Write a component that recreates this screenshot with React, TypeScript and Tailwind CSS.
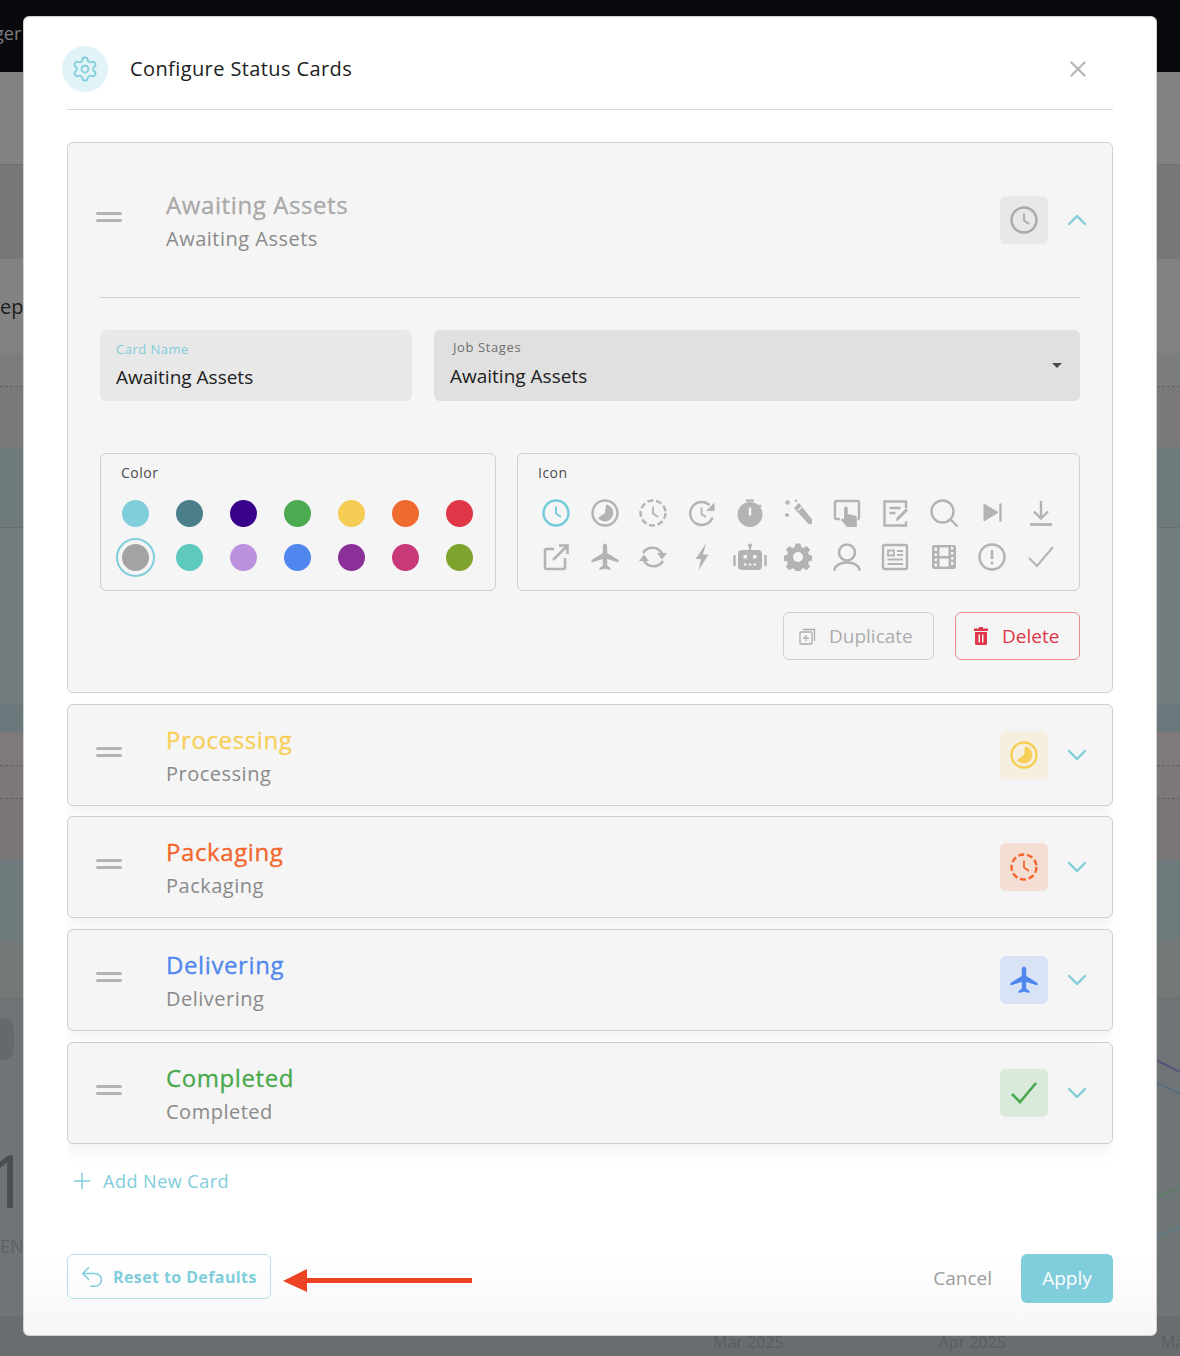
import { ReactNode } from 'react';
import { ChevronDown, ChevronUp, Plus, Settings, Undo2, X } from 'lucide-react';

const font = { fontFamily: '"Open Sans", "Liberation Sans", sans-serif' };

function IconBase({ size = 28, className = '', children }: { size?: number; className?: string; children: ReactNode }) {
  return (
    <svg width={size} height={size} viewBox="0 0 28 28" fill="none" stroke="currentColor" strokeWidth="2.4" className={className}>
      {children}
    </svg>
  );
}

const Clock = () => (
  <IconBase>
    <circle cx="14" cy="14" r="12.5" />
    <path d="M14 7.5v7l5 3.5" strokeWidth="1.8" />
  </IconBase>
);
const Pie = () => (
  <IconBase>
    <circle cx="14" cy="14" r="12.5" />
    <path d="M15 5.500a8.500 8.500 0 1 1-8 13.500l7-5z" fill="currentColor" stroke="none" />
  </IconBase>
);
const DashedClock = () => (
  <IconBase>
    <circle cx="14" cy="14" r="12.5" strokeDasharray="6 2.800" />
    <path d="M14 7.5v7l5 3.5" strokeWidth="1.8" />
  </IconBase>
);
const RotateClock = () => (
  <IconBase>
    <path d="M24.500 18.500A11.500 11.500 0 1 1 21.500 6" />
    <path d="M13.500 8.500v6.500l4.500 3" strokeWidth="1.800" />
    <path d="M26.500 3.500v8.500H18z" fill="currentColor" stroke="none" />
  </IconBase>
);
const Timer = () => (
  <IconBase>
    <path d="M10 1.500h8" strokeWidth="2.200" />
    <path d="M23 6l2 2" />
    <path fillRule="evenodd" d="M14 3a12.500 12.500 0 1 1 0 25 12.500 12.500 0 0 1 0-25zM12.800 8.500v8h2.400v-8z" fill="currentColor" stroke="none" />
  </IconBase>
);
const Wand = () => (
  <IconBase>
    <path d="M10 9l5-5 13 16.500a2.500 2.500 0 0 1-4 4z" fill="currentColor" stroke="none" />
    <path d="M14 11.500l3.500-3.500" stroke="#f5f5f5" strokeWidth="1.300" />
    <path d="M3.500 1v5M1 3.500h5M3 14v4M1 16h4M12 .500v2.500" strokeWidth="1.800" />
  </IconBase>
);
const Touch = () => (
  <IconBase>
    <path d="M7 20H3.500A1.500 1.500 0 0 1 2 18.500V3.500A1.500 1.500 0 0 1 3.500 2h21A1.500 1.500 0 0 1 26 3.500v15a1.500 1.500 0 0 1-1.500 1.500" strokeWidth="2.400" />
    <path d="M11 9.500a1.900 1.900 0 0 1 3.800 0V15l7 1.500a2.500 2.500 0 0 1 2 2.500V28H14l-6-7 1-1.500 2 1z" fill="currentColor" stroke="none" />
  </IconBase>
);
const Note = () => (
  <IconBase>
    <path d="M25 11V2.500H3.500v24H25v-4" strokeWidth="2.400" />
    <path d="M8.500 9h11M8.500 14h6" strokeWidth="2.400" />
    <path d="M14 23l1-4 10-10 2.500 2.500-10 10z" fill="currentColor" stroke="#f5f5f5" strokeWidth="0.800" />
  </IconBase>
);
const Search = () => (
  <IconBase>
    <circle cx="12.500" cy="12.500" r="11" strokeWidth="2.400" />
    <path d="M20.500 20.500l7 7" strokeWidth="2.400" />
  </IconBase>
);
const SkipNext = () => (
  <IconBase>
    <path d="M6 5v17l14-8.500z" fill="currentColor" stroke="currentColor" strokeWidth="1" />
    <path d="M22.500 4.500v18" strokeWidth="2.400" />
  </IconBase>
);
const Download = () => (
  <IconBase>
    <path d="M14 2v17M7 12.500l7 7 7-7" />
    <path d="M3 25.500h22" strokeWidth="2.800" />
  </IconBase>
);
const External = () => (
  <IconBase>
    <path d="M12 6H4.500A1.500 1.500 0 0 0 3 7.500v17A1.500 1.500 0 0 0 4.500 26h17a1.500 1.500 0 0 0 1.500-1.500V15" strokeWidth="2.600" />
    <path d="M11 17L25 3M17 2.500h8.500V11" strokeWidth="2.600" />
  </IconBase>
);
const Plane = () => (
  <IconBase>
    <path d="M14 .500c1.300 0 2.200 1.500 2.200 3.300v6.200L27.500 17v2.500L16.200 16v6.500l3.300 2.500v2L14 25.800 8.500 27v-2l3.300-2.500V16L.500 19.500V17l11.300-7V3.800C11.800 2 12.700.500 14 .500z" fill="currentColor" stroke="none" />
  </IconBase>
);
const Sync = () => (
  <IconBase>
    <path d="M4 10A11 11 0 0 1 23 10.500" strokeWidth="2.600" />
    <path d="M18 10h10l-5 6.500z" fill="currentColor" stroke="none" />
    <path d="M24 18A11 11 0 0 1 5 17.500" strokeWidth="2.600" />
    <path d="M10 18H0l5-6.500z" fill="currentColor" stroke="none" />
  </IconBase>
);
const Bolt = () => (
  <IconBase>
    <path d="M18 .500L7.500 16h5.500l-2.500 11.500L20.500 11.500H15z" fill="currentColor" stroke="none" />
  </IconBase>
);
const Robot = () => (
  <svg width="34" height="28" viewBox="0 0 34 28" fill="none" stroke="currentColor">
    <circle cx="17" cy="2.500" r="2" fill="currentColor" stroke="none" />
    <path d="M16 4h2v4h-2z" fill="currentColor" stroke="none" />
    <rect x="5" y="7" width="24" height="20" rx="4" fill="currentColor" stroke="none" />
    <path d="M10.500 12h3.500v3.500h-3.500zM20 12h3.500v3.500H20z" fill="#f5f5f5" stroke="none" />
    <path d="M11 21.500h2.500M15.800 21.500h2.500M20.500 21.500h2.500" stroke="#f5f5f5" strokeWidth="2" />
    <path d="M1.500 13v9M32.500 13v9" strokeWidth="2.400" strokeLinecap="round" />
  </svg>
);
const Gear = () => (
  <IconBase>
    <path
      fillRule="evenodd"
      d="M11.500.500h5l.8 3.600 2.200.9 3.100-2 3.500 3.500-2 3.100.9 2.200 3.600.8v5l-3.600.8-.9 2.200 2 3.100-3.500 3.500-3.100-2-2.200.9-.8 3.600h-5l-.8-3.600-2.200-.9-3.100 2-3.500-3.500 2-3.100-.9-2.200-3.600-.8v-5l3.600-.8.900-2.200-2-3.100 3.500-3.500 3.100 2 2.200-.9zM14 9a5 5 0 1 0 0 10 5 5 0 0 0 0-10z"
      fill="currentColor"
      stroke="none"
    />
  </IconBase>
);
const Person = () => (
  <IconBase>
    <circle cx="14" cy="9.500" r="8" strokeWidth="2.600" />
    <path d="M1 27.500c1.500-5 6.500-8 13-8s11.500 3 13 8" strokeWidth="2.600" />
  </IconBase>
);
const News = () => (
  <IconBase>
    <rect x="2" y="2" width="24" height="24" rx="1.500" strokeWidth="2.400" />
    <path d="M7 7.500h6v5H7z" strokeWidth="1.800" />
    <path d="M16 8h6M16 12h6M6.500 16.500h15.500M6.500 21h15.500" strokeWidth="2" />
  </IconBase>
);
const Film = () => (
  <IconBase>
    <path
      fillRule="evenodd"
      d="M4 2h20a2 2 0 0 1 2 2v20a2 2 0 0 1-2 2H4a2 2 0 0 1-2-2V4a2 2 0 0 1 2-2zm3 2.500H4.500v3.500H7zm0 6H4.500v2.500H7zm0 5H4.500v2.500H7zm0 5H4.500v3H7zm14-17.500v3.500h2.500V4.500zm0 6v2.500h2.500v-2.500zm0 5v2.500h2.500v-2.500zm0 5v3h2.500v-3zM9.500 4.500V13h9V4.500zm0 11v8h9v-8z"
      fill="currentColor"
      stroke="none"
    />
  </IconBase>
);
const Alert = () => (
  <IconBase>
    <circle cx="14" cy="14" r="12.500" />
    <path d="M14 7v9" strokeWidth="2.600" />
    <circle cx="14" cy="20" r="1.500" fill="currentColor" stroke="none" />
  </IconBase>
);
const Check = ({ width = 2 }: { width?: number }) => (
  <IconBase>
    <path d="M2 15l8 8L26 4" strokeWidth={width} />
  </IconBase>
);
const CopyPlus = () => (
  <svg width="17" height="17" viewBox="0 0 17 17" fill="none" stroke="currentColor" strokeWidth="1.300">
    <rect x="1" y="4" width="12" height="12" rx="1" />
    <path d="M4 1.500h11.500V13M7 7v6M4 10h6" />
  </svg>
);
const TrashFilled = () => (
  <svg width="14" height="18" viewBox="0 0 14 18" fill="currentColor">
    <path d="M5 0h4v1.500h5V4H0V1.500h5z" />
    <path fillRule="evenodd" d="M1 5h12v11.500a1.500 1.500 0 0 1-1.500 1.500h-9A1.500 1.500 0 0 1 1 16.500zm3.500 2.500v8H6v-8zm3.500 0v8h1.500v-8z" />
  </svg>
);

const Drag = () => (
  <div className="flex flex-col gap-[4px] w-[26px] shrink-0 mb-[7px]">
    <div className="h-[3px] rounded-full bg-[#b3b3b3]" />
    <div className="h-[3px] rounded-full bg-[#b3b3b3]" />
  </div>
);

function CardHeader({ title, color, tile, chevronUp, icon }: { title: string; color: string; tile: string; chevronUp?: boolean; icon: ReactNode }) {
  return (
    <div className="flex items-center h-[100px] pl-[28px] pr-[19px]">
      <Drag />
      <div className="ml-[44px] flex-1 mt-[3px]">
        <div className={`text-[24px] leading-[32px] tracking-[0.6px] [-webkit-text-stroke:0.3px] ${color}`}>{title}</div>
        <div className="mt-[3px] text-[20px] leading-[30px] tracking-[0.5px] text-[#8a8a8a]">{title}</div>
      </div>
      <div className={`w-[48px] h-[48px] rounded-[6px] flex items-center justify-center ${tile} ${color}`}>{icon}</div>
      <div className="ml-[13px] text-[#80cdda]">
        {chevronUp ? <ChevronUp size={32} strokeWidth={1.8} /> : <ChevronDown size={32} strokeWidth={1.8} />}
      </div>
    </div>
  );
}

const colors = [
  ['bg-[#80cddb]', 'bg-[#4a7f8a]', 'bg-[#39008c]', 'bg-[#4cab50]', 'bg-[#f5cd55]', 'bg-[#ef6a2e]', 'bg-[#df3648]'],
  ['bg-[#a3a3a3]', 'bg-[#5ecabf]', 'bg-[#bc91de]', 'bg-[#4f87ee]', 'bg-[#8a3098]', 'bg-[#c93878]', 'bg-[#7ea42e]'],
];

function IconCell({ children, active }: { children: ReactNode; active?: boolean }) {
  return <div className={`h-[34px] flex items-center justify-center ${active ? 'text-[#73cadb]' : 'text-[#b3b3b3]'}`}>{children}</div>;
}

export default function App() {
  return (
    <div className="relative h-[1356px] overflow-hidden bg-[#6f7576]" style={font}>
      {/* page behind the dialog */}
      <div className="flex flex-col h-full">
        <div className="h-[72px] shrink-0 bg-[#08090c] text-[18px] leading-[66px] text-[#7c7c7c]">
          <span className="ml-[-6px]">ger</span>
        </div>
        <div className="h-[93px] shrink-0 bg-[#828282] border-b border-[#6f6f6f]" />
        <div className="h-[94px] shrink-0 bg-[#777777]" />
        <div className="h-[94px] shrink-0 bg-[#828282] text-[20px] leading-[96px] text-[#1c1c1c]">ep</div>
        <div className="h-[34px] shrink-0 bg-[#7b7d7d] border-b border-dashed border-[#5f5f5f]" />
        <div className="h-[60px] shrink-0 bg-[#7b7878]" />
        <div className="h-[81px] shrink-0 bg-[#6f7a7d] border-b border-[#656f72]" />
        <div className="h-[177px] shrink-0 bg-[#727b7d]" />
        <div className="h-[27px] shrink-0 bg-[#6b787c]" />
        <div className="h-[34px] shrink-0 bg-[#7d7a79] border-b border-dashed border-[#5f5f5f]" />
        <div className="h-[33px] shrink-0 bg-[#7c7877] border-b border-dashed border-[#5f5f5f]" />
        <div className="h-[60px] shrink-0 bg-[#7a7675]" />
        <div className="h-[81px] shrink-0 bg-[#6e797c]" />
        <div className="h-[59px] shrink-0 bg-[#737879] border-b border-[#686d6e]" />
        <div className="flex-1 bg-[#6f7576] relative">
          <div className="absolute left-[-8px] top-[19px] w-[22px] h-[42px] rounded-[10px] bg-[#646a6b]" />
          <div className="absolute left-[-13px] top-[136px] text-[74px] leading-[90px] text-[#4a4e4f]">1</div>
          <div className="absolute left-0 top-[235px] text-[18px] leading-[24px] text-[#5e6263]">EN</div>
        </div>
        <div className="h-[40px] shrink-0 bg-[#696d6f] flex text-[16px] leading-[22px] pt-[15px] whitespace-nowrap text-[#5a5e60]">
          <span className="ml-[713px]">Mar 2025</span>
          <span className="ml-[155px]">Apr 2025</span>
          <span className="ml-[155px]">Ma</span>
        </div>
      </div>

      {/* chart lines that show past the dialog */}
      <svg width="24" height="190" viewBox="0 0 24 190" fill="none" className="absolute right-0 top-[1050px]">
        <path d="M0 10L24 22" stroke="#5a4f7c" strokeWidth="2" />
        <path d="M0 32L24 44" stroke="#586c78" strokeWidth="2" />
        <path d="M0 148L24 138" stroke="#5c7c62" strokeWidth="2" />
        <path d="M0 186L24 178" stroke="#5b7d80" strokeWidth="2" />
      </svg>

      {/* dialog */}
      <div className="absolute left-[23px] top-[16px] w-[1134px] h-[1320px] rounded-[6px] bg-gradient-to-b from-white from-[94%] to-[#f6f6f6] border border-[#d0d0d0] px-[43px] flex flex-col">
        <div className="h-[93px] shrink-0 border-b border-[#d9d9d9] flex items-center pt-[12px]">
          <div className="ml-[-5px] w-[46px] h-[46px] rounded-full bg-[#e0f3f7] text-[#80cddb] flex items-center justify-center">
            <Settings size={28} strokeWidth={1.5} />
          </div>
          <div className="ml-[22px] text-[20px] tracking-[0.4px] text-[#212121]">Configure Status Cards</div>
          <X size={26} strokeWidth={2.2} className="ml-auto mr-[22px] text-[#b8b8b8]" />
        </div>

        <div className="mt-[32px] flex flex-col gap-[11px] overflow-hidden pb-[23px]">
          {/* expanded card */}
          <div className="h-[551px] shrink-0 rounded-[6px] bg-[#f5f5f5] border border-[#cfcfcf]">
            <div className="h-[154px] pt-[27px]">
              <CardHeader title="Awaiting Assets" color="text-[#a9a9a9]" tile="bg-[#e8e8e8]" chevronUp icon={<Clock />} />
            </div>
            <div className="mx-[32px] border-t border-[#cfcfcf] pt-[32px]">
              <div className="flex gap-[22px]">
                <div className="w-[312px] h-[71px] rounded-[6px] bg-[#e8e8e8] px-[16px] pt-[10px]">
                  <div className="text-[13px] leading-[18px] tracking-[0.5px] text-[#80cddb]">Card Name</div>
                  <div className="text-[19px] leading-[30px] mt-[4px] text-[#212121]">Awaiting Assets</div>
                </div>
                <div className="flex-1 h-[71px] rounded-[6px] bg-[#e0e0e0] pl-[16px] pr-[18px] pt-[9px] flex items-center">
                  <div className="flex-1">
                    <div className="text-[13px] leading-[18px] tracking-[0.6px] ml-[3px] -mt-[3px] text-[#6f6f6f]">Job Stages</div>
                    <div className="text-[19px] leading-[30px] mt-[5px] mb-[9px] text-[#212121]">Awaiting Assets</div>
                  </div>
                  <div className="w-0 h-0 mb-[10px] border-x-[5.5px] border-x-transparent border-t-[5px] border-t-[#4a4a4a]" />
                </div>
              </div>

              <div className="mt-[52px] flex gap-[21px]">
                <div className="w-[396px] h-[138px] rounded-[6px] border border-[#cfcfcf] pl-[15px] pr-[16px] pt-[9px]">
                  <div className="ml-[5px] text-[14px] leading-[20px] tracking-[0.5px] text-[#4a4a4a]">Color</div>
                  <div className="mt-[17px] flex flex-col gap-[17px]">
                    {colors.map((row, r) => (
                      <div key={r} className="flex justify-between">
                        {row.map((c, i) => (
                          <div key={c} className="w-[38px] h-[27px] flex items-center justify-center">
                            <div className={`w-[27px] h-[27px] rounded-full ${c} ${r === 1 && i === 0 ? 'outline-2 outline-offset-[4px] outline-[#80cddb]' : ''}`} />
                          </div>
                        ))}
                      </div>
                    ))}
                  </div>
                </div>
                <div className="flex-1 h-[138px] rounded-[6px] border border-[#cfcfcf] px-[14px] pt-[9px]">
                  <div className="ml-[6px] text-[14px] leading-[20px] tracking-[0.5px] text-[#4a4a4a]">Icon</div>
                  <div className="mt-[13px] grid grid-cols-11 gap-y-[10px]">
                    <IconCell active><Clock /></IconCell>
                    <IconCell><Pie /></IconCell>
                    <IconCell><DashedClock /></IconCell>
                    <IconCell><RotateClock /></IconCell>
                    <IconCell><Timer /></IconCell>
                    <IconCell><Wand /></IconCell>
                    <IconCell><Touch /></IconCell>
                    <IconCell><Note /></IconCell>
                    <IconCell><Search /></IconCell>
                    <IconCell><SkipNext /></IconCell>
                    <IconCell><Download /></IconCell>
                    <IconCell><External /></IconCell>
                    <IconCell><Plane /></IconCell>
                    <IconCell><Sync /></IconCell>
                    <IconCell><Bolt /></IconCell>
                    <IconCell><Robot /></IconCell>
                    <IconCell><Gear /></IconCell>
                    <IconCell><Person /></IconCell>
                    <IconCell><News /></IconCell>
                    <IconCell><Film /></IconCell>
                    <IconCell><Alert /></IconCell>
                    <IconCell><Check /></IconCell>
                  </div>
                </div>
              </div>

              <div className="mt-[21px] flex justify-end gap-[21px]">
                <div className="w-[151px] h-[48px] rounded-[6px] border border-[#cfcfcf] flex items-center pl-[15px] gap-[13px] text-[#acacac] text-[19px]">
                  <CopyPlus />
                  Duplicate
                </div>
                <div className="w-[125px] h-[48px] rounded-[6px] border border-[#ec8a95] flex items-center pl-[18px] gap-[14px] text-[#df3648] text-[19px]">
                  <TrashFilled />
                  Delete
                </div>
              </div>
            </div>
          </div>

          {/* collapsed cards */}
          <div className="rounded-[6px] bg-[#f5f5f5] border border-[#cfcfcf] h-[102px] shrink-0 shadow-[0_8px_16px_rgba(0,0,0,0.05)]">
            <CardHeader title="Processing" color="text-[#f7cf57]" tile="bg-[#f6efdf]" icon={<Pie />} />
          </div>
          <div className="-mt-[1px] rounded-[6px] bg-[#f5f5f5] border border-[#cfcfcf] h-[102px] shrink-0 shadow-[0_8px_16px_rgba(0,0,0,0.05)]">
            <CardHeader title="Packaging" color="text-[#f3662b]" tile="bg-[#f4ddd3]" icon={<DashedClock />} />
          </div>
          <div className="rounded-[6px] bg-[#f5f5f5] border border-[#cfcfcf] h-[102px] shrink-0 shadow-[0_8px_16px_rgba(0,0,0,0.05)]">
            <CardHeader title="Delivering" color="text-[#4f87ee]" tile="bg-[#d9e3f6]" icon={<Plane />} />
          </div>
          <div className="rounded-[6px] bg-[#f5f5f5] border border-[#cfcfcf] h-[102px] shrink-0 shadow-[0_8px_16px_rgba(0,0,0,0.05)]">
            <CardHeader title="Completed" color="text-[#49a84c]" tile="bg-[#d9e9da]" icon={<Check width={2.6} />} />
          </div>
        </div>

        <div className="flex items-center text-[#80cddb] text-[18px] leading-[28px]">
          <Plus size={26} strokeWidth={1.4} className="ml-[2px]" />
          <span className="ml-[8px] tracking-[0.5px]">Add New Card</span>
        </div>

        <div className="mt-[59px] flex items-center">
          <div className="mb-[4px] w-[204px] h-[45px] rounded-[6px] border border-[#b5e2ea] flex items-center pl-[10px] text-[#80cddb]">
            <Undo2 size={28} strokeWidth={1.3} />
            <span className="ml-[7px] text-[16px] font-bold tracking-[0.4px]">Reset to Defaults</span>
          </div>
          {/* annotation arrow */}
          <svg width="190" height="26" viewBox="0 0 190 26" className="ml-[12px] mt-[4px]">
            <path d="M0 13L24 1v9h165v5H24v9z" fill="#ed4224" />
          </svg>
          <span className="ml-auto text-[19px] text-[#9c9c9c]">Cancel</span>
          <div className="ml-[29px] w-[92px] h-[49px] rounded-[6px] bg-[#80cddb] text-white text-[19px] flex items-center justify-center">Apply</div>
        </div>
      </div>
    </div>
  );
}
